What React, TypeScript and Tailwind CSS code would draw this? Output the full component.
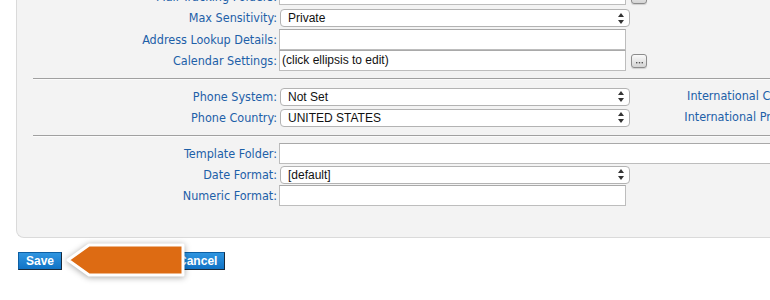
import type { ReactNode } from "react";

const labelFont = "font-['DejaVu_Sans_Condensed','DejaVu_Sans',Tahoma,sans-serif]";
const fieldFont = "font-['Liberation_Sans',Arial,sans-serif]";

function Label({ children, className = "" }: { children: ReactNode; className?: string }) {
  return (
    <div className={`w-[260px] shrink-0 text-right text-[12.5px] leading-[14px] text-[#1d60a8] whitespace-nowrap ${labelFont} ${className}`}>
      {children}
    </div>
  );
}

function TextBox({ value = "", wide = false }: { value?: string; wide?: boolean }) {
  return (
    <div
      className={`h-[21px] ${wide ? "w-[600px]" : "w-[347px]"} shrink-0 border border-[#bdbdbd] border-t-[#a9a9a9] bg-white pl-[2px] text-[12px] leading-[19px] text-[#111] whitespace-nowrap overflow-hidden ${fieldFont}`}
    >
      {value}
    </div>
  );
}

function SelectBox({ value, className = "" }: { value: string; className?: string }) {
  return (
    <div
      className={`ml-[1px] flex h-[18px] w-[350px] shrink-0 items-center justify-between rounded-[4px] border border-[#b3b3b3] bg-white pl-[7px] pr-[5px] text-[12px] text-[#111] ${fieldFont} ${className}`}
    >
      <span>{value}</span>
      <svg width="6" height="11" viewBox="0 0 6 11">
        <path d="M3 0 L6 4 L0 4 Z" fill="#333" />
        <path d="M0 7 L6 7 L3 11 Z" fill="#333" />
      </svg>
    </div>
  );
}

function Ellipsis() {
  return (
    <div className="ml-[3px] flex h-[14px] w-[16px] shrink-0 items-end justify-center rounded-[3px] border border-[#8c8c8c] bg-gradient-to-b from-[#fafafa] to-[#d4d4d4] pb-[3px] shadow-[0_1px_1px_rgba(0,0,0,0.15)]">
      <svg width="7" height="2" viewBox="0 0 7 2">
        <rect x="0" y="0" width="1.4" height="1.4" fill="#555" />
        <rect x="2.8" y="0" width="1.4" height="1.4" fill="#555" />
        <rect x="5.6" y="0" width="1.4" height="1.4" fill="#555" />
      </svg>
    </div>
  );
}

function Row({ h, children }: { h: string; children: ReactNode }) {
  return <div className={`flex items-center gap-[2px] ${h}`}>{children}</div>;
}

function Divider({ className }: { className: string }) {
  return <div className={`ml-[16px] h-[2px] border-t border-[#a0a0a0] border-b border-b-[#fbfbfb] ${className}`} />;
}

function RightLabel({ children }: { children: ReactNode }) {
  return (
    <div className={`w-[163px] shrink-0 text-right text-[12.5px] text-[#1d60a8] whitespace-nowrap ${labelFont}`}>
      {children}
    </div>
  );
}

export default function App() {
  return (
    <div className="relative h-[300px] w-[770px] overflow-hidden bg-white">
      <div className="-mt-[16px] ml-[16px] w-[900px] rounded-bl-[8px] border-b border-l border-[#dadada] bg-[#f3f3f3] pb-[31px]">
        <Row h="h-[21px]">
          <Label className="mt-[4px]">Mail Tracking Folders:</Label>
          <TextBox />
          <div className="self-start mt-[6px]">
            <Ellipsis />
          </div>
        </Row>
        <Row h="h-[24px]">
          <Label className="mt-[2px]">Max Sensitivity:</Label>
          <SelectBox value="Private" className="mt-[2px]" />
        </Row>
        <Row h="h-[21px]">
          <Label>Address Lookup Details:</Label>
          <TextBox />
        </Row>
        <Row h="h-[21px]">
          <Label>Calendar Settings:</Label>
          <TextBox value="(click ellipsis to edit)" />
          <Ellipsis />
        </Row>

        <Divider className="mt-[7px] mb-[6px]" />

        <Row h="h-[21px]">
          <Label>Phone System:</Label>
          <SelectBox value="Not Set" />
          <RightLabel>International Code:</RightLabel>
        </Row>
        <Row h="h-[21px]">
          <Label>Phone Country:</Label>
          <SelectBox value="UNITED STATES" />
          <RightLabel>International Prefix:</RightLabel>
        </Row>

        <Divider className="mt-[7px] mb-[6px]" />

        <Row h="h-[21px]">
          <Label>Template Folder:</Label>
          <TextBox wide />
        </Row>
        <Row h="h-[21px]">
          <Label>Date Format:</Label>
          <SelectBox value="[default]" />
        </Row>
        <Row h="h-[21px]">
          <Label>Numeric Format:</Label>
          <TextBox />
        </Row>
      </div>

      <div className={`mt-[14px] ml-[18px] flex items-center ${fieldFont}`}>
        <button className="h-[18px] border border-[#0d5fa3] border-r-[#1b2a3a] border-b-[#1b2a3a] bg-gradient-to-b from-[#2f95e0] to-[#0f73c6] px-[7px] text-[12px] font-bold leading-[16px] text-white">
          Save
        </button>
        <button className="ml-[108px] h-[18px] border border-[#0d5fa3] border-r-[#1b2a3a] border-b-[#1b2a3a] bg-gradient-to-b from-[#2f95e0] to-[#0f73c6] px-[7px] text-[12px] font-bold leading-[16px] text-white">
          Cancel
        </button>
      </div>

      <svg
        className="absolute left-[60px] top-[238px] drop-shadow-[0_1px_3px_rgba(0,0,0,0.35)]"
        width="132"
        height="46"
        viewBox="60 238 132 46"
      >
        <polygon points="68,260 89,245 183,245 183,275 89,275" fill="#dd6b13" stroke="#ffffff" strokeWidth="3" strokeLinejoin="round" />
      </svg>
    </div>
  );
}
